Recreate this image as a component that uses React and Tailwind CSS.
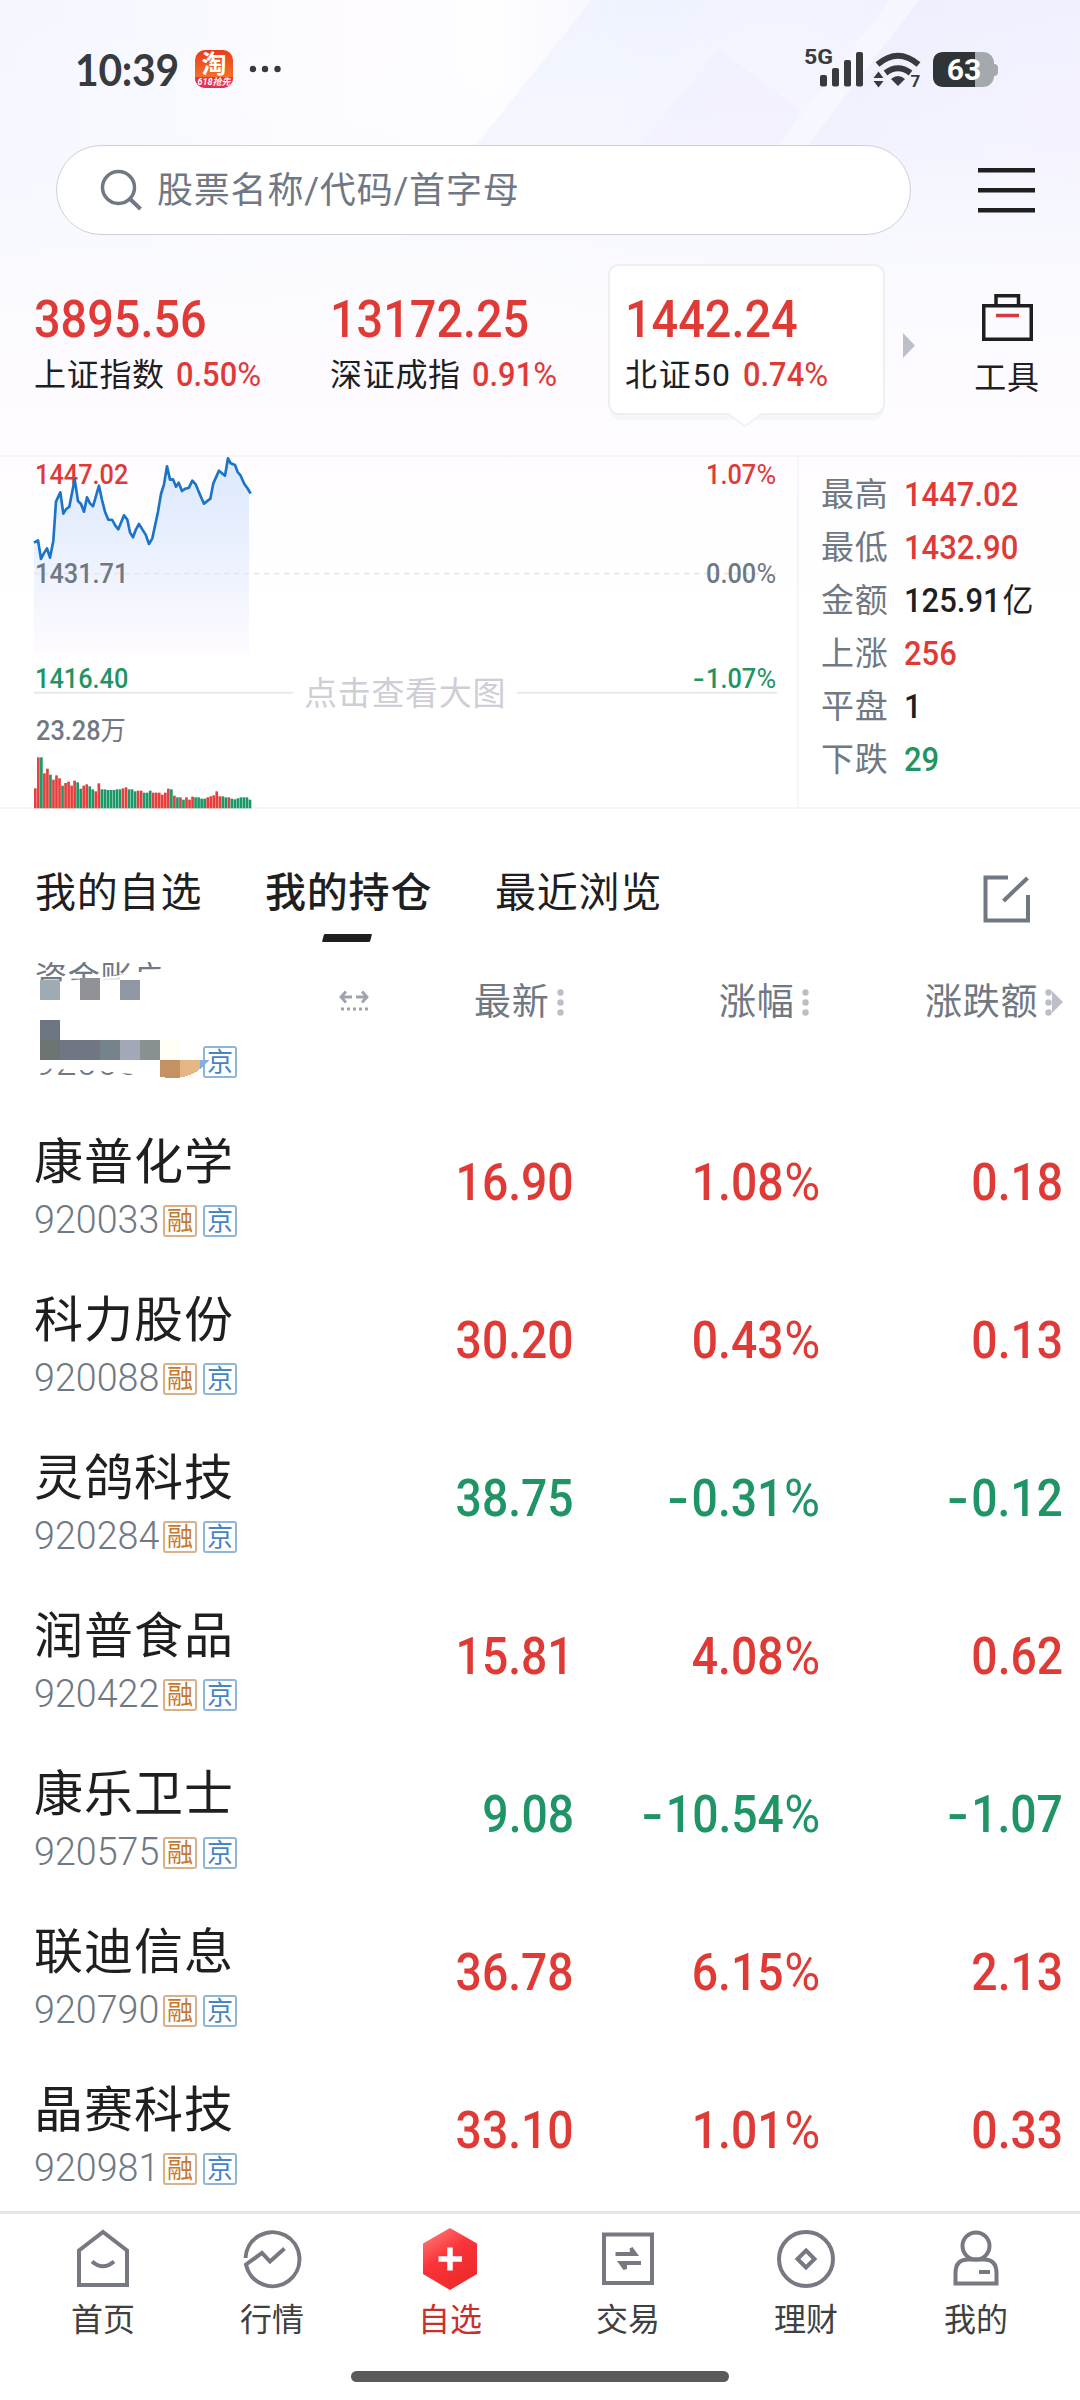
import React from 'react';
import clsx from 'clsx';

const RED = 'text-[#e03a37]';
const GREEN = 'text-[#1f9464]';

const stocks = [
    { name: '康普化学', code: '920033', price: '16.90', pct: '1.08', diff: '0.18' },
    { name: '科力股份', code: '920088', price: '30.20', pct: '0.43', diff: '0.13' },
    { name: '灵鸽科技', code: '920284', price: '38.75', pct: '-0.31', diff: '-0.12' },
    { name: '润普食品', code: '920422', price: '15.81', pct: '4.08', diff: '0.62' },
    { name: '康乐卫士', code: '920575', price: '9.08', pct: '-10.54', diff: '-1.07' },
    { name: '联迪信息', code: '920790', price: '36.78', pct: '6.15', diff: '2.13' },
    { name: '晶赛科技', code: '920981', price: '33.10', pct: '1.01', diff: '0.33' },
];

const stats = [
    { label: '最高', value: '1447.02', color: RED },
    { label: '最低', value: '1432.90', color: RED },
    { label: '金额', value: '125.91', unit: '亿', color: 'text-[#1f1f1f]' },
    { label: '上涨', value: '256', color: RED },
    { label: '平盘', value: '1', color: 'text-[#1f1f1f]' },
    { label: '下跌', value: '29', color: GREEN },
];

const pricePoints =
    '102,306 114,299 123,355 131,339 141,323 150,351 160,300 168,183 181,155 190,219 198,206 208,198 224,116 234,181 243,190 252,213 261,170 270,188 279,197 297,135 306,178 315,213 325,237 337,238 346,255 355,266 372,224 382,237 390,275 399,290 408,266 417,250 427,266 437,282 447,310 457,293 474,213 483,160 492,131 501,77 510,117 519,116 528,138 536,126 546,151 556,144 567,141 577,120 587,131 600,162 612,189 631,174 640,128 657,90 675,105 684,53 692,68 705,73 713,94 722,105 733,130 742,142 752,159';

// r = up, g = down, followed by the bar height
const volumes =
    'r60 r153 g153 r105 r119 g101 r86 r99 r90 g68 r76 r80 r68 r83 g78 g59 r68 r72 g66 g57 r51 r75 g57 g57 g55 g55 g55 g57 g57 r60 r63 g57 g57 g51 r53 r53 g47 g47 g53 r47 r47 r47 r41 r47 r59 g57 r38 g33 r33 g26 r33 r26 r35 g33 g33 g29 g29 r33 r36 r39 r51 r36 g36 g33 r33 g29 g27 g30 g33 g33 g33 g26'.split(' ');

const Num = ({ children, className }) => (
    <span className={clsx('inline-block whitespace-nowrap leading-none', className)}>{children}</span>
);

const Pct = () => <span className="ml-[0.05em] inline-block origin-right scale-x-[1.06] font-normal">%</span>;

const Signed = ({ value }) =>
    value.startsWith('-') ? (
        <>
            <span className="mr-[0.06em] inline-block origin-right scale-x-[1.35]">-</span>
            {value.slice(1)}
        </>
    ) : (
        value
    );

const Backdrop = () => (
    <svg className="absolute left-0 top-0 -z-10" width="1080" height="600" viewBox="0 0 1080 600">
        <defs>
            <linearGradient id="sky" x1="0" y1="0" x2="1" y2="0">
                <stop offset="0" stopColor="#f4f6ff" />
                <stop offset=".15" stopColor="#f7f9ff" />
                <stop offset=".3" stopColor="#fdfbff" />
                <stop offset=".46" stopColor="#fefdff" />
                <stop offset=".6" stopColor="#f3f5ff" />
                <stop offset="1" stopColor="#f1f0fe" />
            </linearGradient>
            <linearGradient id="band" x1="0" y1="0" x2="1" y2=".3">
                <stop offset="0" stopColor="#eaf0fe" />
                <stop offset="1" stopColor="#f1f4ff" stopOpacity="0" />
            </linearGradient>
            <linearGradient id="band2" x1="0" y1="0" x2="1" y2=".3">
                <stop offset="0" stopColor="#e6e9fb" />
                <stop offset="1" stopColor="#f0effe" stopOpacity="0" />
            </linearGradient>
            <linearGradient id="fade" x1="0" y1="0" x2="0" y2="1">
                <stop offset="0" stopColor="#fff" stopOpacity="0" />
                <stop offset=".25" stopColor="#fafaff" stopOpacity=".3" />
                <stop offset=".4" stopColor="#f9faff" stopOpacity=".85" />
                <stop offset=".66" stopColor="#fefbff" />
                <stop offset="1" stopColor="#fff" />
            </linearGradient>
        </defs>
        <rect width="1080" height="600" fill="url(#sky)" />
        <path d="M592 0H930L735 240H400Z" fill="url(#band)" />
        <path d="M719 50L637 147L560 240H735L800 110Z" fill="#eeebfc" opacity=".55" />
        <path d="M919 0H1080V230L960 240H735Z" fill="url(#band2)" />
        <path d="M890 0H919L735 240H706Z" fill="#f8f8ff" opacity=".6" />
        <rect width="1080" height="600" fill="url(#fade)" />
    </svg>
);

const StatusBar = () => (
    <div className="flex h-[145px] shrink-0 items-start justify-between pl-[75px] pr-[82px] pt-[48px] text-[#373b3e]">
        <div className="flex h-[42px] items-center">
            <span className="w-[120px] origin-left scale-x-[.95] font-['Lato'] text-[43px] font-bold leading-none tracking-[-0.3px]">10:39</span>
            <div className="flex h-[38px] w-[38px] flex-col items-center overflow-hidden rounded-[10px] bg-gradient-to-b from-[#e83a1c] to-[#f9802c] leading-none text-white">
                <span className="pt-[2px] text-[25px] font-bold leading-[25px]">淘</span>
                <span className="w-full bg-[#e6304f] text-center text-[9px] font-bold italic leading-[11px]">618抢先</span>
            </div>
            <svg className="ml-[16px]" width="34" height="8" viewBox="0 0 34 8" fill="currentColor">
                <circle cx="4" cy="4" r="3.2" />
                <circle cx="16" cy="4" r="3.2" />
                <circle cx="28.500" cy="4" r="3.2" />
            </svg>
        </div>
        <svg className="overflow-visible" width="196" height="42" viewBox="802 48 196 42" fill="currentColor">
            <text x="804" y="63.500" fontSize="21" fontWeight="700" fontFamily="Roboto" textLength="29" lengthAdjust="spacingAndGlyphs">5G</text>
            <rect x="820" y="75" width="7" height="11.500" rx="2" />
            <rect x="832" y="68" width="7" height="18.500" rx="2" />
            <rect x="844" y="60" width="7" height="26.500" rx="2" />
            <rect x="856" y="52" width="7" height="34.500" rx="2" />
            <path d="M877.500 64.500Q898 47 918.500 64.500" fill="none" stroke="currentColor" strokeWidth="6" />
            <path d="M885.500 73Q898 63.500 910.500 73" fill="none" stroke="currentColor" strokeWidth="6" />
            <path d="M891 79Q898 73 905 79L898 86Z" />
            <path d="M878.500 71.500L883.500 78H873.500ZM878.500 87.500L883.500 81H873.500Z" />
            <text x="910.500" y="87.300" fontSize="17" fontWeight="700" fontFamily="Roboto">7</text>
            <rect x="984" y="64" width="14" height="12" rx="4" fill="#a3a9ac" />
            <rect x="933" y="52" width="61" height="35" rx="11" fill="#a3a9ac" />
            <path d="M944 52H975V87H944Q933 87 933 76V63Q933 52 944 52Z" fill="#2f3437" />
            <text x="964" y="79.700" fontSize="30" fontWeight="700" fontFamily="Roboto" textAnchor="middle" fill="#fff">63</text>
        </svg>
    </div>
);

const SearchRow = () => (
    <div className="flex h-[90px] shrink-0 items-center pl-[56px]">
        <div className="flex h-[90px] w-[855px] items-center rounded-full border border-[#cdd1d8] bg-white pl-[43px] text-[#6f7884]">
            <svg width="42" height="42" viewBox="0 0 42 42" fill="none" stroke="currentColor" strokeWidth="3.500">
                <circle cx="18.500" cy="18.500" r="16" />
                <path d="M29.500 29.500L40.500 40" strokeWidth="4" />
            </svg>
            <span className="ml-[15px] mt-[2px] text-[36px] leading-none tracking-[0.8px]">股票名称/代码/首字母</span>
        </div>
        <svg className="ml-[67px]" width="57" height="45" viewBox="0 0 57 45" fill="#1f1f1f">
            <rect y="0" width="57" height="4.500" />
            <rect y="20" width="57" height="4.500" />
            <rect y="40" width="57" height="4.500" />
        </svg>
    </div>
);

const IndexItem = ({ value, name, pct, className }) => (
    <div className={clsx('flex flex-col', className)}>
        <Num className={clsx('origin-left scale-x-[.9] text-[52px] font-medium', RED)}>{value}</Num>
        <div className="mt-[12px] flex items-center whitespace-nowrap text-[32px] leading-[32px] text-[#1f1f1f]">
            <span className={/\d/.test(name) ? 'tracking-[1.700px]' : 'tracking-[0.7px]'}>{name}</span>
            <Num className={clsx('ml-[11px] origin-left scale-x-[.935] text-[33px] font-medium', RED)}>{pct}<Pct /></Num>
        </div>
    </div>
);

const IndexRow = () => (
    <div className="flex h-[220px] shrink-0 items-start pt-[29px]">
        <IndexItem className="ml-[34px] mt-[30px] w-[296px]" value="3895.56" name="上证指数" pct="0.50" />
        <IndexItem className="mt-[30px] w-[278px]" value="13172.25" name="深证成指" pct="0.91" />
        <div className="relative h-[151px] w-[277px] rounded-[11px] border-2 border-[#eeeff5] bg-white shadow-[0_7px_0_-2px_#f4f6fc]">
            <IndexItem className="ml-[15px] mt-[28px]" value="1442.24" name="北证50" pct="0.74" />
            <svg className="absolute left-[118px] top-[146px]" width="34" height="15" viewBox="0 0 34 15">
                <path d="M0 1.500L17 14L34 1.500V0H0Z" fill="#fff" />
                <path d="M0 1.500L17 14L34 1.500" fill="none" stroke="#eeeff5" strokeWidth="1.500" />
            </svg>
        </div>
        <svg className="ml-[18px] mt-[69px]" width="12" height="25" viewBox="0 0 12 25" fill="#bdbfc8">
            <path d="M0 0L12 12.500L0 25Z" />
        </svg>
        <div className="ml-[59px] mt-[30px] flex w-[66px] flex-col items-center">
            <svg width="51" height="47" viewBox="0 0 51 47" fill="none" stroke="#1f1f1f" strokeWidth="3.500">
                <path d="M1.750 11.750H49.250V45.250H1.750ZM14 11V1.750H36.500V11" />
                <path d="M14 21.500H37" stroke="#d9363e" />
            </svg>
            <span className="mt-[21px] text-[32px] leading-[32px] tracking-[0.7px] text-[#1f1f1f]">工具</span>
        </div>
    </div>
);

const axis = 'absolute scale-x-[.92] text-[27.5px] font-medium';

const ChartPanel = () => (
    <div className="flex h-[354px] shrink-0 border-y-2 border-[#f5f5f7]">
        <div className="relative w-[799px] border-r-2 border-[#f5f5f7]">
            <svg className="absolute left-0 top-[-1px]" width="798" height="353" viewBox="0 46 2394 1059">
                <defs>
                    <linearGradient id="area" gradientUnits="userSpaceOnUse" x1="0" y1="46" x2="0" y2="642">
                        <stop offset="0" stopColor="#dce8fd" />
                        <stop offset=".5" stopColor="#ebf1fe" />
                        <stop offset="1" stopColor="#fefbff" />
                    </linearGradient>
                </defs>
                <polygon points={`102,642 ${pricePoints} 747,160 747,642`} fill="url(#area)" />
                <path d="M102 399H2328" stroke="#e6e7ea" strokeWidth="5" strokeDasharray="16 14" />
                <path d="M102 756H879M1551 756H2331" stroke="#e8e8ea" strokeWidth="6" />
                {volumes.map((v, i) => (
                    <rect
                        key={i}
                        x={102 + i * 9.070}
                        y={1103 - Number(v.slice(1))}
                        width="8"
                        height={v.slice(1)}
                        fill={v[0] === 'r' ? '#e5403d' : '#1c9868'}
                    />
                ))}
            </svg>
            <Num className={clsx(axis, 'left-[35px] top-[4px] origin-left', RED)}>1447.02</Num>
            <Num className={clsx(axis, 'right-[21px] top-[4px] origin-right', RED)}>1.07<Pct /></Num>
            <svg className="absolute left-0 top-[-1px]" width="798" height="353" viewBox="0 46 2394 1059">
                <polyline points={pricePoints} fill="none" stroke="#1b74c8" strokeWidth="8" strokeLinejoin="round" />
            </svg>
            <Num className={clsx(axis, 'left-[35px] top-[103px] origin-left text-[#707883]')}>1431.71</Num>
            <Num className={clsx(axis, 'right-[21px] top-[103px] origin-right text-[#707883]')}>0.00<Pct /></Num>
            <Num className={clsx(axis, 'left-[35px] top-[208px] origin-left', GREEN)}>1416.40</Num>
            <Num className={clsx(axis, 'right-[21px] top-[208px] origin-right', GREEN)}><Signed value="-1.07" /><Pct /></Num>
            <Num className={clsx(axis, 'left-[36px] top-[260px] origin-left text-[#707883]')}>23.28<span className="font-normal">万</span></Num>
            <span className="absolute left-[304px] top-[220px] text-[33px] leading-none tracking-[0.7px] text-[#cdced6]">点击查看大图</span>
        </div>
        <div className="flex flex-col pl-[22px] pt-[11px]">
            {stats.map((s) => (
                <div key={s.label} className="flex h-[53px] items-center">
                    <span className="w-[83px] text-[33px] leading-none tracking-[0.8px] text-[#707883]">{s.label}</span>
                    <Num className={clsx('origin-left scale-x-[.925] text-[33.500px] font-medium', s.color)}>
                        {s.value}{s.unit && <span className="ml-[2px] font-normal">{s.unit}</span>}
                    </Num>
                </div>
            ))}
        </div>
    </div>
);

const TabBar = () => (
    <div className="flex h-[136px] shrink-0 items-start pl-[35px] pt-[63px] text-[41px] leading-[42px] tracking-[0.8px] text-[#1f1f1f]">
        <span className="w-[230px]">我的自选</span>
        <div className="flex w-[230px] flex-col">
            <span className="font-medium">我的持仓</span>
            <i className="ml-[58px] mt-[20px] block h-[8px] w-[48px] -skew-x-[15deg] rounded-[1px] bg-[#1f1f1f]" />
        </div>
        <span className="w-[488px]">最近浏览</span>
        <svg className="mt-[3px]" width="48" height="48" viewBox="0 0 48 48" fill="none" stroke="#707884" strokeWidth="4">
            <path d="M25 2.500H2.500V45.500H45V20M20.500 26L44.500 3" />
        </svg>
    </div>
);

const Dots = () => (
    <svg className="ml-[7px]" width="7" height="27" viewBox="0 0 7 27" fill="#bdbfc8">
        <circle cx="3.500" cy="3.500" r="3.200" />
        <circle cx="3.500" cy="13.500" r="3.200" />
        <circle cx="3.500" cy="23.500" r="3.200" />
    </svg>
);

const Badge = ({ text, className }) => (
    <span className={clsx('flex h-[32px] w-[34px] items-center justify-center rounded-[3px] border-2 text-[26px] leading-none', className)}>{text}</span>
);

const ORANGE_BADGE = 'border-[#d9b087] text-[#c5782f]';
const BLUE_BADGE = 'border-[#8fb5d8] text-[#4585c4]';

const TableHead = () => (
    <div className="relative h-[158px] shrink-0">
        <div className="grid h-[114px] grid-cols-[439px_245px_206px_auto] items-center pl-[35px] text-[37px] leading-none tracking-[0.8px] text-[#707883]">
            <svg className="ml-[304px] mt-[-3px]" width="30" height="22" viewBox="0 0 30 22" fill="none" stroke="#9da3ac" strokeWidth="2.800">
                <path d="M7 1.500L2 7L7 12.500M2 7H13M23 1.500L28 7L23 12.500M28 7H17" />
                <path d="M2 19H29" strokeWidth="3" strokeDasharray="3 3" />
            </svg>
            <div className="flex items-center">最新<Dots /></div>
            <div className="flex items-center">涨幅<Dots /></div>
            <div className="flex items-center">
                涨跌额<Dots />
                <svg width="11" height="22" viewBox="0 0 11 22" fill="#bdbfc8"><path d="M0 0L11 11L0 22Z" /></svg>
            </div>
        </div>

        {/* account row scrolled under the header, masked out */}
        <div className="absolute left-[35px] top-[17px] text-[32px] leading-[32px] tracking-[0.8px] text-[#707883] [clip-path:polygon(0_0,100%_0,100%_6px,60%_14px,0_22px)]">资金账户</div>
        <div className="absolute left-[35px] top-[98px] [clip-path:polygon(0_25px,60%_28px,100%_32px,100%_100%,0_100%)]">
            <Num className="block origin-left scale-x-[.96] text-[39px] font-light text-[#707883]">92003</Num>
        </div>
        <div className="absolute left-[203px] top-[101px] flex">
            <Badge text="京" className={BLUE_BADGE} />
        </div>
        <svg className="absolute left-[40px] top-[32px]" width="170" height="102" viewBox="0 0 170 102" shapeRendering="crispEdges">
            <path d="M60 3L80 0V3Z" fill="#e4e6ee" />
            <rect x="0" y="3" width="20" height="20" fill="#9fabb3" />
            <rect x="40" y="1" width="20" height="22" fill="#909197" />
            <rect x="80" y="3" width="20" height="20" fill="#9097a4" />
            <rect x="0" y="43" width="20" height="20" fill="#6f7683" />
            <rect x="0" y="63" width="20" height="20" fill="#6c7574" />
            <rect x="20" y="63" width="40" height="20" fill="#707683" />
            <rect x="60" y="63" width="20" height="20" fill="#75848a" />
            <rect x="80" y="63" width="20" height="20" fill="#a2a8b7" />
            <rect x="100" y="63" width="20" height="20" fill="#889090" />
            <rect x="120" y="63" width="20" height="20" fill="#fffff5" />
            <path d="M120 83H140V100.500L128 101L120 99.500Z" fill="#c39163" />
            <path d="M140 83H160V92Q152 99 140 100.500Z" fill="#e4b683" />
            <path d="M160 83H169L160 92Z" fill="#84b0d6" />
        </svg>
    </div>
);

const StockRow = ({ stock }) => {
    const color = stock.diff.startsWith('-') ? GREEN : RED;
    return (
        <div className="flex h-[158px] shrink-0 items-center">
            <div className="w-[300px] pl-[34px] pt-[10px]">
                <div className="text-[49px] leading-[50px] tracking-[1px] text-[#1f1f1f]">{stock.name}</div>
                <div className="mt-[17px] flex h-[32px] items-center">
                    <span className="inline-block w-[129px] origin-left scale-x-[.965] text-[39px] font-[350] leading-none text-[#707883]">{stock.code}</span>
                    <Badge text="融" className={ORANGE_BADGE} />
                    <Badge text="京" className={clsx('ml-[6px]', BLUE_BADGE)} />
                </div>
            </div>
            <div className={clsx('flex pt-[2px] text-[52px] font-medium', color)}>
                <div className="w-[274px] text-right"><Num className="origin-right scale-x-[.89]">{stock.price}</Num></div>
                <div className="w-[246px] text-right"><Num className="origin-right scale-x-[.89]"><Signed value={stock.pct} /><Pct /></Num></div>
                <div className="w-[243px] text-right"><Num className="origin-right scale-x-[.89]"><Signed value={stock.diff} /></Num></div>
            </div>
        </div>
    );
};

const icon = { width: 60, height: 66, viewBox: '0 0 60 66', fill: 'none', stroke: '#767982', strokeWidth: 4 };

const navItems = [
    {
        label: '首页',
        width: 'w-[160px]',
        icon: (
            <svg {...icon}>
                <path d="M6 58V23.500L30 5L54 23.500V58Z" />
                <path d="M19 34.500Q30 44 41 34.500" />
            </svg>
        ),
    },
    {
        label: '行情',
        width: 'w-[178px]',
        icon: (
            <svg {...icon}>
                <path d="M3.500 31A27 27 0 1 1 4 37.500L20 26L28 34.500L42.500 21.500" />
            </svg>
        ),
    },
    {
        label: '自选',
        width: 'w-[178px]',
        active: true,
        icon: (
            <svg width="60" height="66" viewBox="0 0 60 66">
                <defs>
                    <linearGradient id="hex" x1="0" y1="0" x2=".6" y2="1">
                        <stop offset="0" stopColor="#ff8585" />
                        <stop offset=".5" stopColor="#fa3438" />
                        <stop offset="1" stopColor="#ee2a2d" />
                    </linearGradient>
                </defs>
                <path d="M30 1L57 16.500V47L30 63L3 47V16.500Z" fill="url(#hex)" />
                <path d="M18.500 32H42M30 20.500V43.500" stroke="#fff" strokeWidth="5.500" />
            </svg>
        ),
    },
    {
        label: '交易',
        width: 'w-[178px]',
        icon: (
            <svg {...icon}>
                <rect x="6" y="7.500" width="48" height="48.500" />
                <path d="M17.500 25H32L31.500 21.500L34.500 20L41 29H17.500ZM43 34V38H29V42L25.500 43L19 34Z" fill="#767982" stroke="none" />
            </svg>
        ),
    },
    {
        label: '理财',
        width: 'w-[178px]',
        icon: (
            <svg {...icon}>
                <circle cx="30" cy="32" r="27" />
                <path d="M30 23.500L38.500 32L30 40.500L21.500 32Z" />
            </svg>
        ),
    },
    {
        label: '我的',
        width: 'w-[162px]',
        icon: (
            <svg {...icon}>
                <circle cx="30" cy="19" r="13.500" />
                <path d="M9.500 56.500V46Q9.500 32.500 22 32.500H38Q50.500 32.500 50.500 46V56.500ZM33 45H44" />
            </svg>
        ),
    },
];

const BottomNav = () => (
    <div className="h-[189px] shrink-0 border-t-[3px] border-[#e6e6e6] bg-white">
        <div className="flex pl-[23px] pt-[13px]">
            {navItems.map((item) => (
                <div key={item.label} className={clsx('flex flex-col items-center', item.width)}>
                    {item.icon}
                    <span className={clsx('mt-[11px] text-[32px] leading-[32px]', item.active ? 'text-[#c9302c]' : 'text-[#404040]')}>{item.label}</span>
                </div>
            ))}
        </div>
        <div className="mx-auto mt-[35px] h-[11px] w-[378px] rounded-full bg-[#5c595c]" />
    </div>
);

const App = () => (
    <div className="relative isolate flex h-[2400px] w-[1080px] flex-col overflow-hidden bg-white font-['Roboto','Noto_Sans_CJK_SC',sans-serif]">
        <Backdrop />
        <StatusBar />
        <SearchRow />
        <IndexRow />
        <ChartPanel />
        <TabBar />
        <TableHead />
        <div className="flex h-[1108px] shrink-0 flex-col">
            {stocks.map((stock) => (
                <StockRow key={stock.code} stock={stock} />
            ))}
        </div>
        <BottomNav />
    </div>
);

export default App;
